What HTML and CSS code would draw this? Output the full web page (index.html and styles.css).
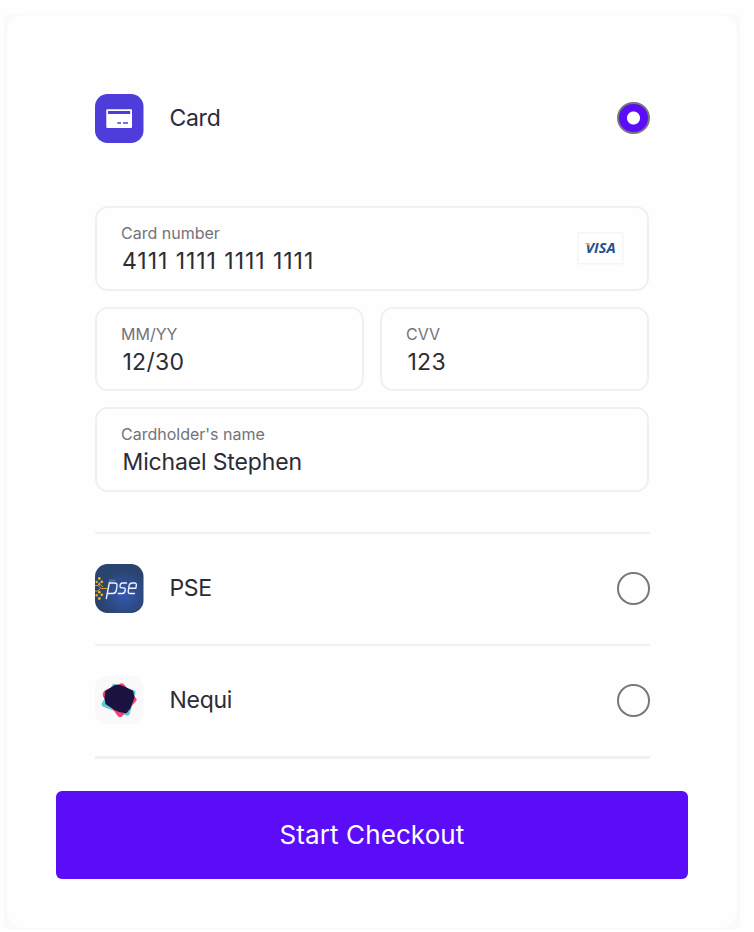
FILE: index.html
```html
<!DOCTYPE html>
<html lang="en">
<head>
<meta charset="utf-8">
<title>Checkout</title>
<link rel="stylesheet" href="styles.css">
</head>
<body>
<div class="frame">
<main class="sheet">
  <section class="methods">
    <label class="method method-card">
      <svg class="icon" viewBox="0 0 49 49"><rect width="48.500" height="49" rx="12.500" fill="#4f3ddb"/><rect x="11.300" y="15.300" width="25.700" height="18.700" rx="1" fill="#fff"/><rect x="13" y="17" width="22.200" height="3" fill="#4f3ddb"/><path d="M22.300 29h3.700M28 29h5" stroke="#4f3ddb" stroke-width="1.600"/></svg>
      <span class="method-name">Card</span>
      <span class="radio selected"></span>
    </label>
    <div class="fields">
      <div class="field wide">
        <div><div class="caption">Card number</div><div class="value number">4111 1111 1111 1111</div></div>
        <svg class="visa" viewBox="0 0 47 33"><rect x="1.250" y=".75" width="44.500" height="31" fill="#fff" stroke="#f5f5f7" stroke-width="1.500"/><text x="8.500" y="21" textLength="30" lengthAdjust="spacingAndGlyphs">VISA</text><path d="M7.200 11h4.600l1.800 5.500q-1.800-3.700-6.400-5.500z" fill="#f5a52b"/></svg>
      </div>
      <div class="field"><div><div class="caption">MM/YY</div><div class="value short">12/30</div></div></div>
      <div class="field"><div><div class="caption">CVV</div><div class="value short">123</div></div></div>
      <div class="field wide"><div><div class="caption">Cardholder's name</div><div class="value name">Michael Stephen</div></div></div>
    </div>
    <label class="method">
      <svg class="icon" viewBox="0 0 49 49">
        <defs><radialGradient id="glow" cx=".6" cy=".62" r=".5"><stop stop-color="#3559b2"/><stop offset="1" stop-color="#29446f"/></radialGradient></defs>
        <rect width="48.500" height="49" rx="12.500" fill="url(#glow)"/>
        <g fill="none" stroke="#d9a02d" stroke-width="1"><path d="M0 21.500h3l3 3h6M0 27h2.500l3-2.500M4.500 19.500v-1M6 21l2 2"/></g>
        <g fill="#edae28"><circle cx="4.300" cy="14.500" r="1.400"/><circle cx="1.700" cy="18" r="1.200"/><circle cx="6.800" cy="17.800" r="1.400"/><circle cx="4.300" cy="20.200" r="1.200"/><circle cx="4.300" cy="28.200" r="1.400"/><circle cx="1.700" cy="31.300" r="1.200"/><circle cx="6.800" cy="30.800" r="1.400"/><circle cx="4.300" cy="34.500" r="1.400"/></g>
        <g fill="none" stroke="#f2f6ff" stroke-width="1.350" stroke-linejoin="round" stroke-linecap="round"><path d="M11.300 34.500l3-15.500h5.200q3 0 2.500 3l-.7 4.500q-.6 3-3.400 3h-5.600"/><path d="M31.500 19h-4q-2 0-2.400 2.500-.4 2.300 1.500 2.400h2.200q1.800.1 1.400 2.300-.5 3.300-2.600 3.300h-4.300"/><path d="M39.500 29.500h-4.200q-2.500 0-2-2.800l.8-5q.6-2.700 3.300-2.700h2q2.300 0 1.900 2.500l-.4 2.700h-7"/></g>
        <path d="M15 15.500l-.4 2h1.500l.3-2M18 15.500l-.4 2M19.500 15.500l-.4 2" fill="none" stroke="#92a4cb" stroke-width=".6"/>
      </svg>
      <span class="method-name">PSE</span>
      <span class="radio"></span>
    </label>
    <label class="method">
      <svg class="icon" viewBox="0 0 49 49"><rect width="48.500" height="48.500" rx="12.500" fill="#f9f9f9"/>
        <path d="M17.500 8.600q1.300-1.300 3-.6l18.500 6.500q2.100.8 1.500 2.800L34.700 38q-.8 2.200-3.200 1.500L8.700 31Q6 29.800 6.900 27.300z" fill="#60c8d6"/>
        <path d="M25.500 7.500q1.900-.9 3.200.6l12.600 14.500q.9 1.200-.1 2.500L27 40.500q-2.200 1.600-4-.3L8 20.500q-.7-1.600 0-3.500.6-2 2.500-3z" fill="#f54378"/>
        <path d="M19.500 9.200Q23.500 8.200 27.500 9.700L38.200 14.700 39.500 21.500 35.500 32.300 31.500 37.300Q25.500 37.500 19.500 34L10.500 28 9.500 21.500 10.300 15z" fill="#1b123f"/>
      </svg>
      <span class="method-name">Nequi</span>
      <span class="radio"></span>
    </label>
  </section>
  <button class="checkout">Start Checkout</button>
</main>
</div>
</body>
</html>
```
FILE: styles.css
```css
* { box-sizing: border-box; }
body { margin: 0; padding: 14px 14px 3px 4px; height: 932px; background: #fefefe; color: #2c2c35; font-family: Inter, "Liberation Sans", sans-serif; }
.frame { height: 915px; padding: 1px 3px; background: #f9fafb; border-radius: 5px; }
.sheet { height: 913px; padding: 47px 49px 0; background: #fefefe; border-radius: 17px; }
.methods { margin: 0 38.5px 0 39px; border-bottom: 3px solid #f0f0f4; }
.method { height: 112px; display: flex; align-items: center; border-top: 2px solid #f0f0f4; }
.method-card { border: 0; }
.icon { width: 49px; height: 49px; flex: none; }
.method-name { margin: -2px 0 0 25.4px; font-size: 23px; line-height: 30px; letter-spacing: -0.25px; }
.method-card .method-name { margin-top: 0; }
.radio { width: 32.5px; height: 32.5px; margin-left: auto; border: 2px solid #77777d; border-radius: 50%; }
.selected { background: radial-gradient(circle, #fff 6px, #5c0df8 7px); }
.fields { display: grid; grid-template-columns: 1fr 1fr; gap: 16px 16px; padding: 32px 0.5px 40px 0; }
.field { height: 84.500px; padding: 3px 24px 0; display: flex; align-items: center; justify-content: space-between; border: 2px solid #eff0f3; border-radius: 13px; }
.wide { grid-column: 1 / -1; }
.caption { font-size: 16px; line-height: 20px; color: #737379; }
.value { margin: 3px 0 0 1px; font-size: 23px; line-height: 30px; }
.number { letter-spacing: 0.95px; }
.short { margin-left: 1.5px; letter-spacing: 0.25px; }
.name { margin-left: 1.5px; letter-spacing: -0.15px; }
.visa { width: 47px; height: 33px; margin: -2px -1px 0 0; }
.visa text { font: italic 700 14px "Open Sans", sans-serif; fill: #254f91; }
.checkout { display: block; width: 632px; height: 88px; margin-top: 32px; padding: 0; border: 0; border-radius: 6px; background: #5c0df8; color: #fff; font: 26px/32px Inter, sans-serif; letter-spacing: 0.1px; }
```
